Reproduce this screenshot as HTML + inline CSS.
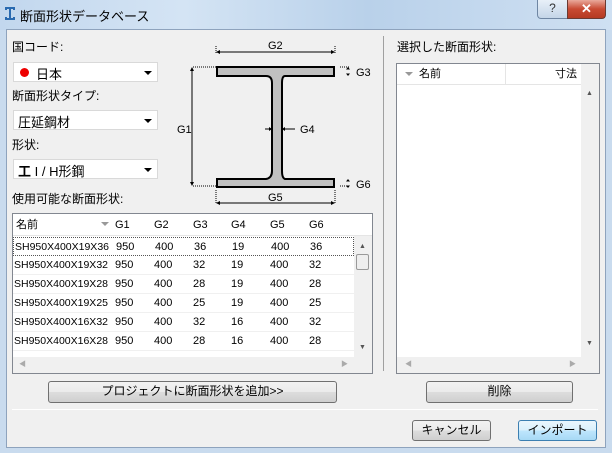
<!DOCTYPE html>
<html><head><meta charset="utf-8"><style>
*{box-sizing:border-box;margin:0;padding:0}
body{width:612px;height:453px;overflow:hidden;background:#c9dbee;font-family:"Liberation Sans","Noto Sans CJK JP",sans-serif;font-size:12px;color:#000;position:relative}
.a{position:absolute}
.title{left:0;top:0;width:612px;height:30px;background:linear-gradient(90deg,#c2d7ee 0%,#d4e4f4 30%,#b9d1ea 60%,#cfe0f2 100%)}
.client{left:6px;top:29px;width:600px;height:419px;background:#f0f0f0;border:1px solid #8ea3bd}
.combo{background:#fff;border:1px solid #d9d9d9;height:20px;width:145px}
.combo .arr{position:absolute;right:5px;top:8px;border-left:4px solid transparent;border-right:4px solid transparent;border-top:4px solid #000}
.lbl{font-size:12px}
.btn{border:1px solid #707070;border-radius:3px;background:linear-gradient(#f2f2f2 0%,#ebebeb 50%,#dddddd 51%,#cfcfcf 100%);text-align:center;font-size:12px;line-height:19px}
.list{background:#fff;border:1px solid #828790}
.hdr{background:#fff;border-bottom:1px solid #e5e5e5;height:22px}
.row{height:19px;border-bottom:1px solid #f0f0f0;font-size:11px;line-height:19px;font-family:"Liberation Sans",sans-serif}
.row span,.hdr span{position:absolute}
.row span:first-child{font-size:10.5px}
</style></head><body>
<div class="a title"></div>
<svg class="a" style="left:4px;top:7px" width="12" height="13"><path d="M1 1h10M1 12h10M6 1v11M2 1v2M10 1v2M2 12v-2M10 12v-2" stroke="#2a6ab0" stroke-width="2" fill="none"/></svg>
<div class="a" style="left:20px;top:6px;font-size:13px">断面形状データベース</div>
<div class="a" style="left:537px;top:0;width:31px;height:19px;border:1px solid #6f86a3;border-top:none;border-radius:0 0 0 4px;background:linear-gradient(#e8f0f8,#c4d5e8);text-align:center;font-size:12px;line-height:17px;color:#333">?</div>
<div class="a" style="left:567px;top:0;width:39px;height:19px;border:1px solid #6a3a32;border-top:none;border-radius:0 0 4px 0;background:linear-gradient(#e9a99b,#c84a33 50%,#b53a22);color:#fff;text-align:center;font-weight:bold;font-size:13px;line-height:17px">✕</div>
<div class="a client"></div>
<div class="a lbl" style="left:12px;top:38px">国コード:</div>
<div class="a combo" style="left:13px;top:62px"><div class="a" style="left:6px;top:5px;width:9px;height:9px;border-radius:50%;background:#e00"></div><span class="a" style="left:22px;top:1px;font-size:13px">日本</span><div class="arr"></div></div>
<div class="a lbl" style="left:12px;top:87px">断面形状タイプ:</div>
<div class="a combo" style="left:13px;top:110px"><span class="a" style="left:4px;top:1px;font-size:13px">圧延鋼材</span><div class="arr"></div></div>
<div class="a lbl" style="left:12px;top:136px">形状:</div>
<div class="a combo" style="left:13px;top:159px"><span class="a" style="left:4px;top:1px;font-size:13px"><b>工</b> I / H形鋼</span><div class="arr"></div></div>
<div class="a lbl" style="left:12px;top:190px">使用可能な断面形状:</div>
<svg class="a" style="left:170px;top:35px" width="210" height="175" font-family="Liberation Sans" font-size="11">
<g stroke="#000" fill="none" stroke-width="1">
<path d="M46 32H22M170 32h10M46 151H22M170 151h10M46 18V10M165 18v-8M46 155v14M165 155v14" stroke-dasharray="1,1"/>
<path d="M48 17H163M48 168H163M22 34V149M95 94h6M113 94h12"/>
</g>
<g fill="#000"><path d="M46 17l4-2v4zM165 17l-4-2v4zM46 168l4-2v4zM165 168l-4-2v4zM22 32l-2 4h4zM22 151l-2-4h4zM102 94l-3-2v4zM112 94l3-2v4zM178 32l-2 2.5h4zM178 41l-2-2.5h4zM178 144l-2 2.5h4zM178 153l-2-2.5h4z"/></g>
<path d="M47 32H164V41H115Q112 41 112 48V136Q112 143 115 144H164V152H47V144H96Q102 143 102 136V48Q102 41 96 41H47Z" fill="#c0c0c0" stroke="#000" stroke-width="2"/>
<text x="98" y="14">G2</text><text x="186" y="41">G3</text><text x="7" y="98">G1</text><text x="130" y="98">G4</text><text x="98" y="166">G5</text><text x="186" y="153">G6</text>
</svg>
<div class="a list" style="left:12px;top:213px;width:361px;height:161px;overflow:hidden">
<div class="hdr a" style="left:0;top:0;width:359px;font-size:11px;line-height:22px">
<span style="left:3px">名前</span><span style="left:88px;top:8px;border-left:4px solid transparent;border-right:4px solid transparent;border-top:4px solid #999;width:0;height:0"></span>
<span style="left:102px">G1</span><span style="left:141px">G2</span><span style="left:180px">G3</span><span style="left:218px">G4</span><span style="left:257px">G5</span><span style="left:296px">G6</span>
</div>
<div class="a" style="left:0;top:23px;width:341px">
<div class="row a" style="top:0;width:341px;border:1px dotted #555"><span style="left:1px">SH950X400X19X36</span><span style="left:102px">950</span><span style="left:141px">400</span><span style="left:180px">36</span><span style="left:218px">19</span><span style="left:257px">400</span><span style="left:296px">36</span></div>
<div class="row a" style="top:19px;width:341px"><span style="left:1px">SH950X400X19X32</span><span style="left:102px">950</span><span style="left:141px">400</span><span style="left:180px">32</span><span style="left:218px">19</span><span style="left:257px">400</span><span style="left:296px">32</span></div>
<div class="row a" style="top:38px;width:341px"><span style="left:1px">SH950X400X19X28</span><span style="left:102px">950</span><span style="left:141px">400</span><span style="left:180px">28</span><span style="left:218px">19</span><span style="left:257px">400</span><span style="left:296px">28</span></div>
<div class="row a" style="top:57px;width:341px"><span style="left:1px">SH950X400X19X25</span><span style="left:102px">950</span><span style="left:141px">400</span><span style="left:180px">25</span><span style="left:218px">19</span><span style="left:257px">400</span><span style="left:296px">25</span></div>
<div class="row a" style="top:76px;width:341px"><span style="left:1px">SH950X400X16X32</span><span style="left:102px">950</span><span style="left:141px">400</span><span style="left:180px">32</span><span style="left:218px">16</span><span style="left:257px">400</span><span style="left:296px">32</span></div>
<div class="row a" style="top:95px;width:341px"><span style="left:1px">SH950X400X16X28</span><span style="left:102px">950</span><span style="left:141px">400</span><span style="left:180px">28</span><span style="left:218px">16</span><span style="left:257px">400</span><span style="left:296px">28</span></div>
</div>
<div class="a" style="left:341px;top:22px;width:18px;height:121px;background:#f0f0f0"><div class="a" style="left:2px;top:18px;width:13px;height:16px;border:1px solid #999;background:#eee;border-radius:2px"></div><div class="a" style="left:5px;top:7px;font-size:7px;color:#555">▲</div><div class="a" style="left:5px;top:108px;font-size:7px;color:#555">▼</div></div>
<div class="a" style="left:0;top:143px;width:359px;height:16px;background:#f0f0f0"><span class="a" style="left:6px;top:2px;font-size:7px;color:#aaa">◀</span><span class="a" style="left:328px;top:2px;font-size:7px;color:#aaa">▶</span></div>
</div>
<div class="a" style="left:383px;top:36px;width:1px;height:335px;background:#a0a0a0"></div>
<div class="a lbl" style="left:397px;top:38px">選択した断面形状:</div>
<div class="a list" style="left:396px;top:63px;width:204px;height:311px;overflow:hidden">
<div class="hdr a" style="left:0;top:0;width:184px;height:21px;font-size:11px;line-height:21px"><span style="left:8px;top:8px;border-left:4px solid transparent;border-right:4px solid transparent;border-top:4px solid #999;width:0;height:0"></span><span style="left:22px">名前</span><span style="left:108px;top:0;width:1px;height:21px;background:#e5e5e5"></span><span style="left:158px">寸法</span></div>
<div class="a" style="left:184px;top:0;width:18px;height:293px;background:#f0f0f0"><div class="a" style="left:5px;top:26px;font-size:7px;color:#555">▲</div><div class="a" style="left:5px;top:276px;font-size:7px;color:#555">▼</div></div>
<div class="a" style="left:0;top:293px;width:202px;height:16px;background:#f0f0f0"><span class="a" style="left:8px;top:2px;font-size:7px;color:#aaa">◀</span><span class="a" style="left:172px;top:2px;font-size:7px;color:#aaa">▶</span></div>
</div>
<div class="a btn" style="left:48px;top:381px;width:289px;height:22px">プロジェクトに断面形状を追加>></div>
<div class="a btn" style="left:426px;top:381px;width:147px;height:22px">削除</div>
<div class="a" style="left:12px;top:409px;width:586px;height:1px;background:#d5d5d5;border-bottom:1px solid #fff"></div>
<div class="a btn" style="left:412px;top:420px;width:79px;height:21px">キャンセル</div>
<div class="a btn" style="left:518px;top:420px;width:79px;height:21px;border-color:#3c7fb1;background:linear-gradient(#eaf6fd,#d9f0fc 50%,#bee6fd 51%,#a7d9f5)">インポート</div>
</body></html>
